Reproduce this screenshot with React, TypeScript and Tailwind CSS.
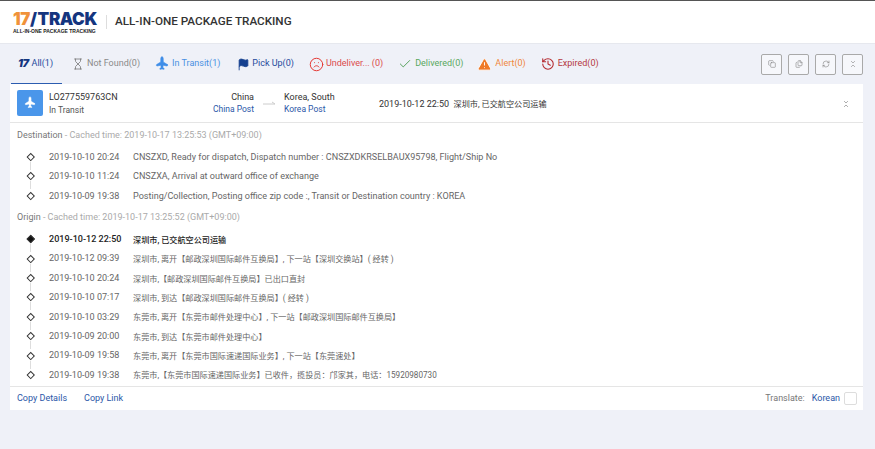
import React from 'react';
import { Copy, Files, RefreshCw, ChevronsDownUp, Hourglass, Plane, Flag, Frown, Check, TriangleAlert, History } from 'lucide-react';

const FONT = 'font-["Roboto","Noto_Sans_CJK_SC",sans-serif]';

const tabs = [
  { label: 'Not Found(0)', color: 'text-[#8a8a8a]', box: 'w-[9px] mr-[5px]', icon: <Hourglass className="w-[12px] h-[14px] shrink-0 text-[#777]" strokeWidth={1.6} /> },
  { label: 'In Transit(1)', color: 'text-[#4a90e2] mr-[2px]', box: 'w-[12px] mr-[4px]', icon: <Plane className="w-[14px] h-[14px] shrink-0 text-[#3f8ee8] fill-[#3f8ee8] -rotate-45" strokeWidth={1} /> },
  { label: 'Pick Up(0)', color: 'text-[#1f4a9c]', box: 'w-[11px] mr-[3px]', icon: <Flag className="w-[13px] h-[13px] shrink-0 text-[#15408f] fill-[#15408f]" strokeWidth={1.6} /> },
  { label: 'Undeliver... (0)', color: 'text-[#dc4b4b]', box: 'w-[13px] mr-[3px]', icon: <Frown className="w-[15px] h-[15px] shrink-0 text-[#e53935]" strokeWidth={1.6} /> },
  { label: 'Delivered(0)', color: 'text-[#5aa85e] -mr-[1px]', box: 'w-[12px] mr-[4px]', icon: <Check className="w-[14px] h-[14px] shrink-0 text-[#4f9d55]" strokeWidth={1.6} /> },
  { label: 'Alert(0)', color: 'text-[#f0873c]', box: 'w-[13px] mr-[4px]', icon: <TriangleAlert className="w-[15px] h-[15px] shrink-0 text-white fill-[#ef7a28]" strokeWidth={1.5} /> },
  { label: 'Expired(0)', color: 'text-[#b5393f]', box: 'w-[13px] mr-[3px]', icon: <History className="w-[14px] h-[14px] shrink-0 text-[#b3262c]" strokeWidth={1.8} /> },
];

const toolButtons = [Copy, Files, RefreshCw, ChevronsDownUp];

const destination = [
  ['2019-10-10 20:24', 'CNSZXD, Ready for dispatch, Dispatch number : CNSZXDKRSELBAUX95798, Flight/Ship No'],
  ['2019-10-10 11:24', 'CNSZXA, Arrival at outward office of exchange'],
  ['2019-10-09 19:38', 'Posting/Collection, Posting office zip code :, Transit or Destination country : KOREA'],
];

const origin = [
  ['2019-10-12 22:50', '深圳市, 已交航空公司运输'],
  ['2019-10-12 09:39', '深圳市, 离开【邮政深圳国际邮件互换局】, 下一站【深圳交换站】( 经转 )'],
  ['2019-10-10 20:24', '深圳市,【邮政深圳国际邮件互换局】已出口直封'],
  ['2019-10-10 07:17', '深圳市, 到达【邮政深圳国际邮件互换局】( 经转 )'],
  ['2019-10-10 03:29', '东莞市, 离开【东莞市邮件处理中心】, 下一站【邮政深圳国际邮件互换局】'],
  ['2019-10-09 20:00', '东莞市, 到达【东莞市邮件处理中心】'],
  ['2019-10-09 19:58', '东莞市, 离开【东莞市国际速递国际业务】, 下一站【东莞速处】'],
  ['2019-10-09 19:38', '东莞市,【东莞市国际速递国际业务】已收件，揽投员：邝家其，电话：15920980730'],
];

const Diamond = ({ solid }: { solid?: boolean }) => (
  <span className={`block w-[5.5px] h-[5.5px] rotate-45 border border-[#333] ${solid ? 'bg-[#111]' : 'bg-white'}`} />
);

const EventList = ({ rows, highlightFirst, cjk }: { rows: string[][]; highlightFirst?: boolean; cjk?: boolean }) => (
  <div className="flex flex-col">
    {rows.map(([time, text], i) => {
      const strong = highlightFirst && i === 0;
      return (
        <div key={time + i} className="relative flex items-center h-[19.4px] pl-[39px] text-[9.05px] whitespace-nowrap">
          {i < rows.length - 1 && <span className="absolute left-[20px] top-[14px] h-[8px] w-px bg-[#ddd]" />}
          <span className="absolute left-[17.5px] top-[6px]"><Diamond solid={strong} /></span>
          <span className={`w-[84px] shrink-0 ${strong ? 'font-medium text-[#222]' : 'text-[#666]'}`}>{time}</span>
          <span className={`${cjk ? 'text-[8.15px]' : ''} ${strong ? 'font-medium text-[#222]' : 'text-[#666]'}`}>{text}</span>
        </div>
      );
    })}
  </div>
);

export default function App() {
  return (
    <div className={`${FONT} w-[875px] h-[449px] overflow-hidden flex flex-col bg-[#eff1f8] border-t border-[#555]`}>
      <header className="h-[43px] shrink-0 bg-white flex items-center pl-[13px] border-b border-[#e6e8ee]">
        <div className="w-[84px] flex flex-col leading-none">
          <div className="flex items-baseline font-['Inter'] font-black text-[17px] h-[16px] leading-[16px] tracking-[-0.4px] whitespace-nowrap">
            <span className="text-[#f0923a]">17</span>
            <span className="text-[#14357f] mr-[1px]">/</span>
            <span className="text-[#14357f]">TRACK</span>
          </div>
          <span className="font-['Liberation_Sans'] font-bold text-[5px] text-[#222] mt-[2px] whitespace-nowrap">ALL-IN-ONE PACKAGE TRACKING</span>
        </div>
        <span className="w-px h-[14px] bg-[#ddd] ml-[9px] mr-[8px]" />
        <h1 className="text-[11.7px] font-medium text-[#333] whitespace-nowrap">ALL-IN-ONE PACKAGE TRACKING</h1>
      </header>

      <div className="h-[40px] shrink-0 flex items-center justify-between pl-[11px] pr-[12px]">
        <nav className="flex items-stretch h-full text-[9px] whitespace-nowrap">
          <div className="flex items-center w-[51px] pl-[7px] gap-[2px] border-b border-[#2b5cb0] text-[#1f4a9c]">
            <span className="font-['Inter'] font-black italic text-[11px] tracking-[-0.5px] text-[#14357f]">17</span>
            <span className="ml-[1px]">All(1)</span>
          </div>
          <div className="flex items-center gap-[16px] pl-[11px]">
            {tabs.map((t) => (
              <span key={t.label} className={`flex items-center ${t.color}`}>
                <span className={`flex items-center justify-center ${t.box}`}>{t.icon}</span>
                {t.label}
              </span>
            ))}
          </div>
        </nav>
        <div className="flex items-center gap-[6px]">
          {toolButtons.map((Icon, i) => (
            <button key={i} className="w-[21px] h-[21px] flex items-center justify-center bg-[#f6f7fb] border border-[#a9a9a9] rounded-[2px]">
              <Icon className="w-[8px] h-[8px] text-[#777]" strokeWidth={1.6} />
            </button>
          ))}
        </div>
      </div>

      <main className="w-[853px] ml-[10px] h-[326px] shrink-0 bg-white flex flex-col text-[#333]">
        <div className="h-[39px] shrink-0 flex items-center border-b border-[#e5e5e5] pl-[7px] pr-[13px] whitespace-nowrap">
          <span className="w-[26px] h-[26px] rounded-[2px] bg-[#4a96ea] flex items-center justify-center">
            <Plane className="w-[12px] h-[12px] text-white fill-white -rotate-45" strokeWidth={1} />
          </span>
          <div className="ml-[6px] w-[120px] flex flex-col gap-[2px] pt-[1px] text-[9px] leading-[11px]">
            <span className="text-[#333]">LO277559763CN</span>
            <span className="text-[#555] text-[8.5px]">In Transit</span>
          </div>
          <div className="w-[85px] flex flex-col items-end gap-[1px] pt-[1px] text-[9px] leading-[11px]">
            <span>China</span>
            <span className="text-[#2b57a8] text-[8.5px]">China Post</span>
          </div>
          <span className="w-[30px] flex justify-center">
            <svg width="13" height="5" viewBox="0 0 13 5"><path d="M0 3h12M9 1l3 2" stroke="#ccc" fill="none" strokeWidth="1" /></svg>
          </span>
          <div className="w-[95px] flex flex-col gap-[1px] pt-[1px] text-[9px] leading-[11px]">
            <span>Korea, South</span>
            <span className="text-[#2b57a8] text-[8.5px]">Korea Post</span>
          </div>
          <span className="text-[9px] text-[#333] pt-[3px]">2019-10-12 22:50&nbsp;&nbsp;<span className="text-[8.15px]">深圳市, 已交航空公司运输</span></span>
          <ChevronsDownUp className="ml-auto w-[8px] h-[8px] text-[#666] mt-[2px]" strokeWidth={1.6} />
        </div>

        <div className="flex-1 flex flex-col">
          <div className="h-[25px] flex items-center pl-[7px] text-[9px] whitespace-nowrap">
            <span className="text-[#777]">Destination</span>
            <span className="text-[#aaa]">&nbsp;- Cached time: 2019-10-17 13:25:53 (GMT+09:00)</span>
          </div>
          <EventList rows={destination} />
          <div className="h-[24px] flex items-center pl-[7px] text-[9px] whitespace-nowrap">
            <span className="text-[#777]">Origin</span>
            <span className="text-[#aaa]">&nbsp;- Cached time: 2019-10-17 13:25:52 (GMT+09:00)</span>
          </div>
          <EventList rows={origin} highlightFirst cjk />
        </div>

        <div className="h-[24px] shrink-0 flex items-center border-t border-[#e5e5e5] pl-[7px] pr-[6px] text-[9px] whitespace-nowrap">
          <span className="text-[#2b57a8]">Copy Details</span>
          <span className="text-[#2b57a8] ml-[17px]">Copy Link</span>
          <span className="ml-auto text-[#777]">Translate:</span>
          <span className="text-[#2b57a8] ml-[7px]">Korean</span>
          <span className="ml-[4px] w-[13px] h-[13px] border border-[#ddd] rounded-[2px]" />
        </div>
      </main>
    </div>
  );
}
